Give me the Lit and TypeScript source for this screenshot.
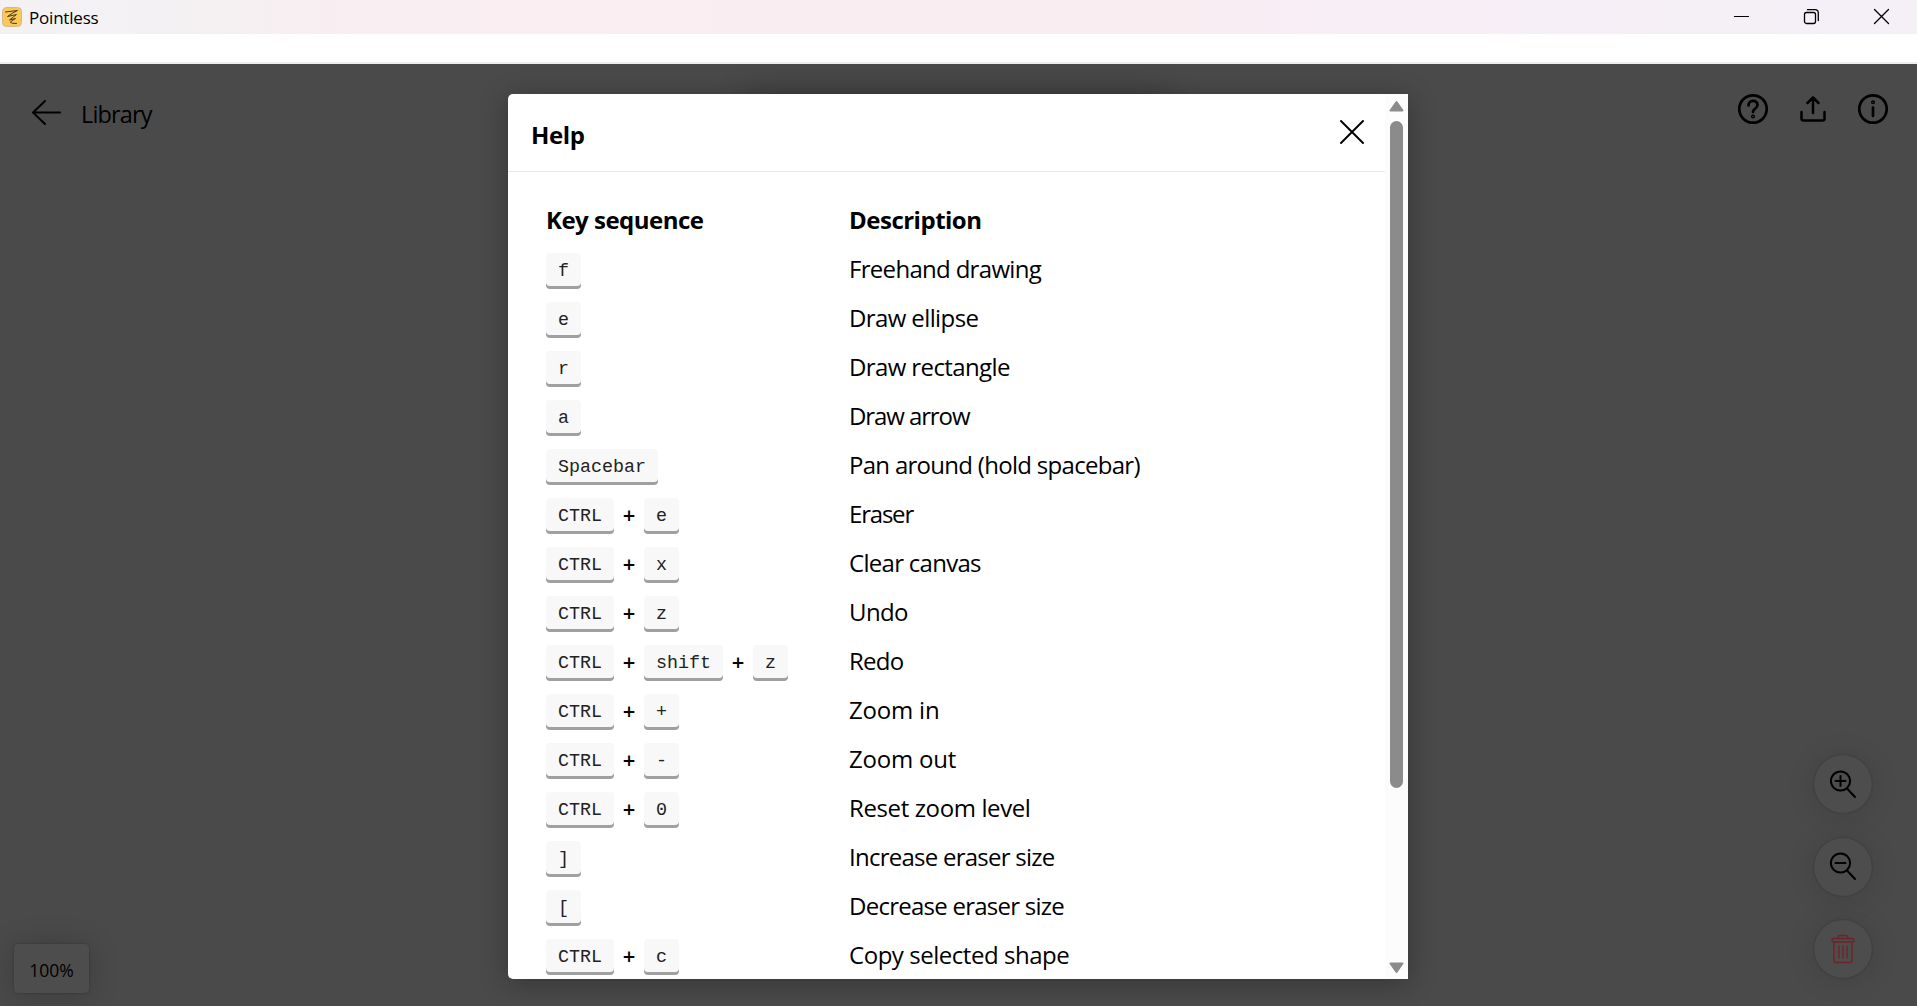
import { LitElement, html, svg, css } from "lit";
import { customElement } from "lit/decorators.js";

type Row = { keys: string[]; text: string; fit: number };

const ROWS: Row[] = [
  { keys: ["f"], text: "Freehand drawing", fit: -0.69 },
  { keys: ["e"], text: "Draw ellipse", fit: -0.61 },
  { keys: ["r"], text: "Draw rectangle", fit: -0.61 },
  { keys: ["a"], text: "Draw arrow", fit: -1.1 },
  { keys: ["Spacebar"], text: "Pan around (hold spacebar)", fit: -0.71 },
  { keys: ["CTRL", "e"], text: "Eraser", fit: -1.2 },
  { keys: ["CTRL", "x"], text: "Clear canvas", fit: -0.71 },
  { keys: ["CTRL", "z"], text: "Undo", fit: -0.6 },
  { keys: ["CTRL", "shift", "z"], text: "Redo", fit: -0.75 },
  { keys: ["CTRL", "+"], text: "Zoom in", fit: -0.2 },
  { keys: ["CTRL", "-"], text: "Zoom out", fit: -0.2 },
  { keys: ["CTRL", "0"], text: "Reset zoom level", fit: -0.38 },
  { keys: ["]"], text: "Increase eraser size", fit: -0.75 },
  { keys: ["["], text: "Decrease eraser size", fit: -0.75 },
  { keys: ["CTRL", "c"], text: "Copy selected shape", fit: -0.46 },
];

const lens = svg`<circle cx="11.5" cy="11" r="9.6"/><path d="M18 18.5L26 27"/><path d="M6.5 11H16.5"/>`;

@customElement("app-root")
export class AppRoot extends LitElement {
  static styles = css`
    :host { display: block; width: 100vw; height: 100vh; overflow: hidden; font-family: "Open Sans", "Noto Sans", sans-serif; color: #000; }
    * { box-sizing: border-box; }
    svg { display: block; fill: none; stroke: #000; stroke-linecap: round; stroke-linejoin: round; }
    .window { height: 100%; display: flex; flex-direction: column; background: #fff; }
    .titlebar { height: 34px; flex: none; display: flex; align-items: center; padding: 0 27px 0 2px; background: linear-gradient(90deg, #f3f2f3 0, #f4f1f3 10%, #f9eef2 18%, #f9edf2 62%, #f8eef6 70%, #f4f0f6 100%); }
    .name { margin-left: 7px; font-size: 17px; line-height: 34px; padding-top: 1px; flex: 1; letter-spacing: -0.2px; }
    .controls { display: flex; gap: 53px; align-items: center; padding-bottom: 1px; }
    .menubar { height: 30px; flex: none; background: #fff; border-bottom: 2px solid #eee; }
    .canvas { flex: 1; position: relative; background: #4a4a4a; overflow: hidden; }
    .back { display: flex; align-items: flex-start; gap: 20px; padding: 33px 0 0 32px; font-size: 23.5px; line-height: 34px; width: 300px; letter-spacing: -0.85px; }
    .back svg { margin-top: 3px; }
    .top { display: flex; justify-content: space-between; padding-right: 28px; }
    .actions { display: flex; gap: 28px; padding-top: 29px; }
    .tools { position: absolute; top: 32px; left: 747px; width: 424px; height: 60px; border-radius: 6px; box-shadow: 0 0 34px rgba(0,0,0,.25); }
    .zooms { position: absolute; right: 45px; bottom: 28px; display: flex; flex-direction: column; gap: 24.5px; }
    .round { width: 58px; height: 58px; border-radius: 50%; background: #4d4d4d; display: flex; align-items: center; justify-content: center; box-shadow: 0 0 2px rgba(0,0,0,.3), 0 2px 30px rgba(0,0,0,.12); }
    .level { position: absolute; left: 14px; bottom: 13px; width: 75px; height: 49px; border-radius: 4px; background: #4d4d4d; font-size: 17.5px; line-height: 52px; text-align: center; box-shadow: 0 0 2px rgba(0,0,0,.3), 0 2px 30px rgba(0,0,0,.2); }
    .dialog { position: absolute; top: 30px; left: 508px; width: 900px; height: 885px; display: flex; background: #fff; border-radius: 5px 0 0 5px; box-shadow: 0 4px 28px rgba(0,0,0,.3); overflow: hidden; }
    .content { flex: 1; overflow: hidden; }
    .head { height: 78px; display: flex; align-items: center; justify-content: space-between; padding: 0 21px 0 23px; border-bottom: 1px solid #e8e8e8; font-weight: 700; font-size: 24px; letter-spacing: -0.4px; }
    .head span { padding-top: 3px; }
    .head svg { margin-bottom: 1px; }
    .list { padding: 25px 0 0 38px; }
    .row { display: grid; grid-template-columns: 303px 1fr; height: 49px; }
    .keys { display: flex; align-items: flex-start; padding-top: 6px; }
    .key { height: 36px; padding: 0 12px; border-radius: 4px; background: #f8f8f8; box-shadow: inset 0 -3px #a0a0a0; color: #222; font: 18.33px/38px "Courier New", "Liberation Mono", monospace; white-space: pre; }
    .plus { width: 30px; text-align: center; font-size: 22px; line-height: 32px; font-weight: 600; }
    .text { font-size: 24px; line-height: 44px; white-space: nowrap; }
    .labels { height: 50px; font-weight: 700; letter-spacing: -0.5px; }
    .labels .text { line-height: 46px; }
    .bar { width: 23px; display: flex; flex-direction: column; align-items: center; background: #fcfcfc; padding: 6px 0 5px; }
    .thumb { width: 13px; height: 667px; border-radius: 7px; background: #8b8b8b; margin: 9px 0 auto; }
    .tri { fill: #8b8b8b; stroke: #8b8b8b; }
    .danger { stroke: #6b2529; }
  `;

  render() {
    return html`<div class="window">
      <div class="titlebar">
        <svg width="20" height="20" viewBox="0 0 20 20"><rect x=".5" y=".5" width="19" height="19" rx="4" fill="#fac858" stroke="#d9b98a"/><path d="M3.500 5L15.500 3.500Q10 6 5.500 9.500L14.500 7.500Q12 9.500 7.500 13L13.500 11.500Q8 14.500 8.500 15.500Q9 16.500 14.500 16.500" stroke="#4b3a1b" stroke-width="1"/></svg>
        <span class="name">Pointless</span>
        <div class="controls">
          <svg width="17" height="17" viewBox="0 0 17 17" stroke-width="1.200"><path d="M1.500 8.500H15.500"/></svg>
          <svg width="17" height="17" viewBox="0 0 17 17" stroke-width="1.300"><rect x="1.500" y="4.500" width="11" height="11" rx="2"/><path d="M4.500 1.700H12Q15.300 1.700 15.300 5V12.500"/></svg>
          <svg width="17" height="17" viewBox="0 0 17 17" stroke-width="1.300"><path d="M1.500 1.500L15.500 15.500M15.500 1.500L1.500 15.500"/></svg>
        </div>
      </div>
      <div class="menubar"></div>
      <div class="canvas">
        <div class="top">
          <div class="back">
            <svg width="29" height="26" viewBox="0 0 29 26" stroke-width="2"><path d="M28 12.500H1M13 1L1 12.500L13 24"/></svg>
            <span>Library</span>
          </div>
          <div class="actions">
            <svg width="32" height="32" viewBox="0 0 32 32" stroke-width="2.700"><circle cx="16" cy="16" r="13.700"/><path d="M11.500 12.500C11.500 6.500 20.500 6.500 20.500 12C20.500 15.500 16 15.500 16 19"/><circle cx="16" cy="23.500" r=".7"/></svg>
            <svg width="32" height="32" viewBox="0 0 32 32" stroke-width="2.500"><path d="M16 20V4.500M10.500 10L16 4.500L21.500 10M4.500 19V25.500Q4.500 27.500 6.500 27.500H25.500Q27.500 27.500 27.500 25.500V19"/></svg>
            <svg width="32" height="32" viewBox="0 0 32 32" stroke-width="2.700"><circle cx="16" cy="16" r="13.700"/><path d="M16 14.500V23"/><circle cx="16" cy="9.300" r=".7"/></svg>
          </div>
        </div>
        <div class="tools"></div>
        <div class="zooms">
          <div class="round"><svg width="28" height="29" viewBox="0 0 28 29" stroke-width="2">${lens}<path d="M11.500 6V16"/></svg></div>
          <div class="round"><svg width="28" height="29" viewBox="0 0 28 29" stroke-width="2">${lens}</svg></div>
          <div class="round"><svg class="danger" width="24" height="30" viewBox="0 0 24 30" stroke-width="1.400"><rect x="1" y="4.500" width="22" height="3.500" rx="1.500"/><path d="M7 4.500Q7 1.500 9 1.500H15Q17 1.500 17 4.500M3 8V26.500Q3 28.500 5 28.500H19Q21 28.500 21 26.500V8M8 12V24M12 12V24M16 12V24"/></svg></div>
        </div>
        <div class="level">100%</div>
        <div class="dialog">
          <div class="content">
            <div class="head"><span>Help</span><svg width="24" height="24" viewBox="0 0 24 24" stroke-width="1.900"><path d="M1 1L23 23M23 1L1 23"/></svg></div>
            <div class="list">
              <div class="row labels"><div class="text">Key sequence</div><div class="text">Description</div></div>
              ${ROWS.map((r) => html`<div class="row">
                <div class="keys">${r.keys.map((k, i) => html`${i ? html`<span class="plus">+</span>` : ""}<span class="key">${k}</span>`)}</div>
                <div class="text" style="letter-spacing:${r.fit}px">${r.text}</div>
              </div>`)}
            </div>
          </div>
          <div class="bar">
            <svg class="tri" width="15" height="12" viewBox="0 0 15 12" stroke-width="2"><path d="M7.500 2L13.500 10.500H1.500Z"/></svg>
            <div class="thumb"></div>
            <svg class="tri" width="15" height="12" viewBox="0 0 15 12" stroke-width="2"><path d="M7.500 10L13.500 1.500H1.500Z"/></svg>
          </div>
        </div>
      </div>
    </div>`;
  }
}
